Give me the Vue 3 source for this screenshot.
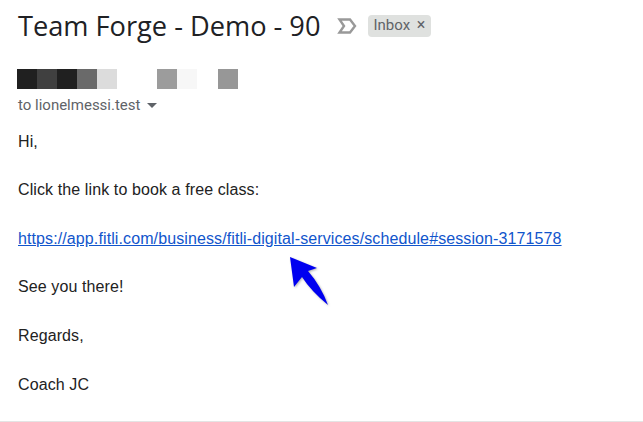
<script setup>
const cells = ['#202020','#404040','#202020','#6a6a6a','#dcdcdc','#fff','#fff','#9c9c9c','#f7f7f7','#fff','#979797']
const lines = ['Hi,','Click the link to book a free class:']
const after = ['See you there!','Regards,','Coach JC']
</script>

<template>
  <main class="mail">
    <header class="head">
      <h1 class="title">Team Forge - Demo - 90</h1>
      <svg class="imp" width="20" height="16" viewBox="0 0 20 16">
        <path d="M2.5 1.5H13L18 8L13 14.5H2.5L7 8Z" fill="none" stroke="#999" stroke-width="2.4"/>
      </svg>
      <span class="chip">Inbox <span class="x">×</span></span>
    </header>
    <div class="sender">
      <i v-for="(c, n) in cells" :key="n" class="cell" :style="{ background: c }"></i>
    </div>
    <div class="to">to lionelmessi.test <span class="caret"></span></div>
    <div class="body">
      <p v-for="l in lines" :key="l">{{ l }}</p>
      <p><a href="#">https://app.fitli.com/business/fitli-digital-services/schedule#session-3171578</a></p>
      <p v-for="l in after" :key="l">{{ l }}</p>
    </div>
    <svg class="arrow" width="60" height="60" viewBox="0 0 60 60">
      <path d="M10 7L37 18L28 21Q41 36 48 55Q31 41 22 27L14 37Z" fill="#0000f0"/>
    </svg>
  </main>
</template>

<style scoped>
.mail { position: relative; width: 643px; height: 422px; box-sizing: border-box; padding: 8px 0 0 18px; border-bottom: 1px solid #e4e4e4; background: #fff; overflow: hidden; font-family: "Liberation Sans", Arial, sans-serif; }
.head { display: flex; align-items: center; height: 36px; }
.title { margin: 0; font: 400 27.2px/36px "Open Sans", sans-serif; color: #202124; white-space: nowrap; }
.imp { margin-left: 17px; }
.chip { margin-left: 11px; height: 22px; margin-top: -1px; padding: 0 6px 0 5px; border-radius: 4px; background: #dfe1df; color: #5f6368; font: 15px/20px Roboto, sans-serif; white-space: nowrap; }
.x { margin-left: 3px; font-size: 16px; }
.sender { display: flex; margin: 25px 0 0 -1px; height: 20px; }
.cell { width: 20px; height: 20px; }
.cell:last-child { margin-left: 1px; }
.to { margin-top: 7px; font: 15px/18px Roboto, sans-serif; color: #5f6368; }
.caret { display: inline-block; margin-left: 3px; vertical-align: 2px; border: 5.5px solid transparent; border-top-color: #5f6368; border-bottom-width: 0; }
.body { margin-top: 15.7px; font-size: 16px; line-height: 24.3px; letter-spacing: 0.105px; color: #222; }
.body p { margin: 0 0 24.3px; }
.body a { color: #1155cc; text-decoration: underline; }
.arrow { position: absolute; left: 280px; top: 250px; filter: drop-shadow(1px 1px 1px rgba(0, 0, 0, .3)); }
</style>
